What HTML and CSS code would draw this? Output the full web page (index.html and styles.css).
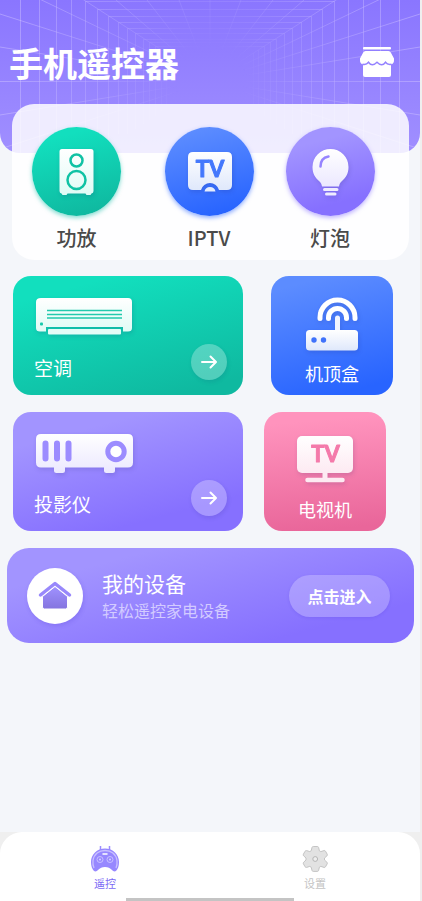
FILE: index.html
```html
<!DOCTYPE html>
<html lang="zh-CN">
<head>
<meta charset="utf-8">
<meta name="viewport" content="width=device-width, initial-scale=1">
<title>手机遥控器</title>
<link rel="stylesheet" href="styles.css">
</head>
<body>
<div class="app">
  <header class="hero">
    <svg class="hero-grid" viewBox="0 0 420 153" preserveAspectRatio="xMidYMin slice" aria-hidden="true">
      <defs>
        <radialGradient id="fade" gradientUnits="userSpaceOnUse" cx="210" cy="81" r="210">
          <stop offset="0.15" stop-color="#fff" stop-opacity="0"/>
          <stop offset="0.5" stop-color="#fff" stop-opacity="0.5"/>
          <stop offset="1" stop-color="#fff"/>
        </radialGradient>
        <mask id="fadeMask" maskUnits="userSpaceOnUse" x="0" y="0" width="420" height="153"><rect width="420" height="153" fill="url(#fade)"/></mask>
        <path id="wall" d="M399.500 0V153M380.500 0V153M363.500 0V153M348.500 0V153M334.500 1V153M322.500 9V153M311.500 16V153M301.500 22V134M292.500 28V134M284.500 33V129M276.500 39V124M270.500 42V120M264.500 46V116M258.500 50V112M253.500 53V109M210 81L420-54M210 81L420-20M210 81L420 14M210 81L420 47M210 81.500H420M210 81L420 115M210 81L420 149"/>
      </defs>
      <g mask="url(#fadeMask)" stroke="#d9ccff" stroke-opacity="0.42" fill="none">
        <use href="#wall"/>
        <use href="#wall" transform="translate(420 0) scale(-1 1)"/>
        <path d="M86 1.500H334M98 9.500H322M109 16.500H311M119 22.500H301M128 28.500H292M136 33.500H284M144 39.500H276M150 42.500H270M156 46.500H264M210 81V0M210 81L241 0M210 81L273 0M210 81L304 0M210 81L179 0M210 81L147 0M210 81L116 0"/>
      </g>
    </svg>
    <h1>手机遥控器</h1>
    <button class="shop" type="button" aria-label="商店">
      <svg width="36" height="32" viewBox="0 0 36 32" fill="#fff">
        <rect x="4" y="1" width="28" height="2.500" rx="1"/>
        <path d="M4 16.500h28V29q0 2-2 2H6q-2 0-2-2z"/>
        <path d="M6.500 5h23q1.500 0 2.300 1.500l3.200 6v1.500a4.500 4.500 0 0 1-8.500 2.300 4.700 4.700 0 0 1-8.500 0 4.700 4.700 0 0 1-8.500 0A4.500 4.500 0 0 1 1 14v-1.500l3.200-6Q5 5 6.500 5z"/>
        <path d="M3.500 18.300q4 .8 6-2 3.500 5 8.500 0 5 5 8.500 0 2 2.800 6 2" fill="none" stroke="#9482ff" stroke-width="1.500"/>
      </svg>
    </button>
  </header>

  <main>
    <section class="quick">
      <a class="quick-item" href="#amp">
        <svg class="disc green" viewBox="0 0 89 89">
          <g class="lift">
            <path fill="url(#mint)" d="M30 22h29q2.500 0 2.500 2.500V64q0 2-2 2.500L58.500 68h-4l-1-1.500h-18l-1 1.500h-4l-1-1.500q-2-.5-2-2.500V24.500q0-2.500 2.500-2.500z"/>
            <circle cx="44.500" cy="33.500" r="6" fill="none" stroke="#10c2a4" stroke-width="2.500"/>
            <circle cx="44.500" cy="53" r="9" fill="none" stroke="#10c2a4" stroke-width="2.500"/>
          </g>
          <defs>
            <linearGradient id="mint" x2="0" y2="1"><stop stop-color="#fff"/><stop offset="1" stop-color="#e0fbf5"/></linearGradient>
          </defs>
        </svg>
        <span>功放</span>
      </a>
      <a class="quick-item" href="#iptv">
        <svg class="disc blue" viewBox="0 0 89 89">
          <g class="lift">
            <path fill="url(#ice)" d="M28 25h34q5 0 5 5v28q0 5-5 5h-8a9.300 9.300 0 0 0-18 0h-8q-5 0-5-5V30q0-5 5-5z"/>
            <path fill="#e4ecfd" d="M39.500 64.500a5.600 5.600 0 0 1 11 0z"/>
            <text class="tv" x="45" y="50" text-anchor="middle" font-size="22" fill="#4478fc" stroke="#4478fc">TV</text>
          </g>
          <defs><linearGradient id="ice" x2="0" y2="1"><stop stop-color="#fff"/><stop offset="1" stop-color="#dfe8fb"/></linearGradient></defs>
        </svg>
        <span>IPTV</span>
      </a>
      <a class="quick-item" href="#bulb">
        <svg class="disc violet" viewBox="0 0 89 89">
          <g class="lift">
            <path fill="url(#lilac)" d="M44.500 22a18 18 0 0 1 18 18c0 7-3 11-6.500 14-2 2-2.500 3-3 5.500H36c-.5-2.500-1-3.500-3-5.500-3.500-3-6.500-7-6.500-14a18 18 0 0 1 18-18z"/>
            <path d="M38.500 62.500h12.500M40.500 67h8.500" stroke="#efecff" stroke-width="3" stroke-linecap="round"/>
            <path d="M34.500 39.500q0-8.500 8-10" fill="none" stroke="#9684ff" stroke-width="2.500" stroke-linecap="round"/>
          </g>
          <defs><linearGradient id="lilac" x2="0" y2="1"><stop stop-color="#fff"/><stop offset="1" stop-color="#ebe8ff"/></linearGradient></defs>
        </svg>
        <span>灯泡</span>
      </a>
    </section>

    <div class="row">
      <a class="tile wide green" href="#ac">
        <svg class="lift" width="98" height="40" viewBox="0 0 98 40">
          <path fill="url(#mint)" d="M5 0h87q4 0 4 4v26q0 3.500-4 3.500h-5V29H10v4.500H4Q0 33.500 0 30V4Q0 0 5 0z"/>
          <path d="M11 12.500h75M11 16.500h75M11 20h75" stroke="#22c9ad" stroke-width="1.500"/>
          <rect x="4" y="24.500" width="3" height="3" rx="1" fill="#16c9ab"/>
          <rect x="12" y="31" width="73" height="5.500" rx="1" fill="#e4fcf7"/>
        </svg>
        <div class="foot">
          <span>空调</span>
          <svg class="go" viewBox="0 0 36 36"><path d="M11 18h13.500M19.500 12.500l5.500 5.500-5.500 5.500"/></svg>
        </div>
      </a>
      <a class="tile small blue" href="#box">
        <svg class="lift" width="54" height="54" viewBox="0 0 54 54">
          <g fill="none" stroke="#fff" stroke-width="5" stroke-linecap="round">
            <path d="M15 20.500v-1a17.500 17.500 0 0 1 35 0v1M23.500 20.500v-1a9 9 0 0 1 18 0v1"/>
            <path d="M32.500 20V34" stroke="#f1f4ff"/>
          </g>
          <rect x="1" y="32" width="52" height="20.500" rx="3.500" fill="url(#ice)"/>
          <circle cx="9" cy="42" r="2.700" fill="#3f72fb"/><circle cx="18.500" cy="42" r="2.700" fill="#3f72fb"/>
        </svg>
        <span>机顶盒</span>
      </a>
    </div>

    <div class="row row-second">
      <a class="tile wide violet" href="#projector">
        <svg class="lift" width="98" height="40" viewBox="0 0 98 40">
          <path fill="url(#lilac)" d="M5 0h87q5 0 5 5v23.500q0 5-5 5H79v3q0 2.500-2.500 2.500h-6q-2.500 0-2.500-2.500v-3H29v3q0 2.500-2.500 2.500h-6q-2.500 0-2.500-2.500v-3H5q-5 0-5-5V5q0-5 5-5z"/>
          <path d="M9.500 9.500v15M21 9.500v15M32.500 9.500v15" stroke="#9c8cff" stroke-width="6" stroke-linecap="round"/>
          <circle cx="80" cy="17.500" r="8.200" fill="#fff" stroke="#9c8cff" stroke-width="5"/>
        </svg>
        <div class="foot">
          <span>投影仪</span>
          <svg class="go" viewBox="0 0 36 36"><path d="M11 18h13.500M19.500 12.500l5.500 5.500-5.500 5.500"/></svg>
        </div>
      </a>
      <a class="tile small pink" href="#tv">
        <svg class="lift" width="58" height="54" viewBox="0 0 58 54">
          <rect x="1" y="2" width="56" height="37" rx="5" fill="url(#rose)"/>
          <path d="M29 38v8" stroke="#fdeaf2" stroke-width="5"/>
          <path d="M11.500 46h35" stroke="#fdeaf2" stroke-width="4.500" stroke-linecap="round"/>
          <text class="tv" x="29.500" y="28" text-anchor="middle" font-size="22" fill="#f47aaa" stroke="#f47aaa">TV</text>
          <defs><linearGradient id="rose" x2="0" y2="1"><stop stop-color="#fff"/><stop offset="1" stop-color="#fdeaf2"/></linearGradient></defs>
        </svg>
        <span>电视机</span>
      </a>
    </div>

    <section class="banner violet">
      <svg class="home" viewBox="0 0 56 56">
        <circle cx="28" cy="28" r="28" fill="#fff"/>
        <path d="M13.500 27L28 15.500 42.500 27" fill="none" stroke="#9888fb" stroke-width="3.500" stroke-linecap="round" stroke-linejoin="round"/>
        <path d="M28 18.500L40.500 28.500V39q0 2-2 2h-21q-2 0-2-2V28.500z" fill="url(#house)" stroke="#fff"/>
        <defs><linearGradient id="house" x2="0" y2="1"><stop stop-color="#a092ff"/><stop offset="1" stop-color="#8474df"/></linearGradient></defs>
      </svg>
      <div class="banner-text">
        <h2>我的设备</h2>
        <p>轻松遥控家电设备</p>
      </div>
      <button class="enter" type="button">点击进入</button>
    </section>
  </main>

  <div class="dock">
    <nav class="tabs">
      <a class="tab active" href="#remote">
        <svg width="28" height="26" viewBox="0 0 28 26">
          <path d="M9.500 0v5M18.500 0v5" stroke="#9b8cff" stroke-width="1.500"/>
          <path d="M14 2.500c8 0 14 6 14 13.500 0 4-1 7-3 9-1.500 1-3 .3-4-1-2-2-4-3-7-3s-5 1-7 3c-1 1.300-2.500 2-4 1-2-2-3-5-3-9C0 8.500 6 2.500 14 2.500z" fill="#9788ff"/>
          <path d="M3 22q-1.500-3-1-7.500C3 8 8 4.500 14 4.500S25 8 26 14.500q.5 4.500-1 7.500" fill="none" stroke="#c9c1ff" stroke-width="1.300"/>
          <g fill="none" stroke="#c9c1ff"><circle cx="9" cy="13.500" r="3"/><circle cx="19" cy="13.500" r="3"/></g>
          <circle cx="9" cy="13.500" r="1" fill="#d8d2ff"/><circle cx="19" cy="13.500" r="1" fill="#d8d2ff"/>
          <path d="M12 8h4" stroke="#fff" stroke-width="1.500" stroke-linecap="round"/>
        </svg>
        <span>遥控</span>
      </a>
      <a class="tab" href="#settings">
        <svg width="28" height="26" viewBox="0 0 28 26">
          <path d="M11 1.500q.3-1 1.300-1h4q1 0 1.300 1l.8 3.300 1.400.8 3.200-1q1-.2 1.500.6l1.700 3q.5 1-.3 1.700L23.500 12v2l2.400 2.200q.8.700.3 1.600l-1.700 3q-.5.800-1.500.6l-3.200-1-1.400.8-.8 3.200q-.3 1-1.300 1h-4q-1 0-1.300-1l-.8-3.200-1.400-.8-3.200 1q-1 .2-1.500-.6l-1.700-3q-.5-.9.300-1.600L5 14v-2L2.700 9.900q-.8-.7-.3-1.700l1.700-3q.5-.8 1.500-.6l3.200 1 1.400-.8z" fill="#e2e2e2" stroke="#c4c4c4"/>
          <circle cx="14.200" cy="13" r="2.400" fill="#eee" stroke="#b5b5b5"/>
        </svg>
        <span>设置</span>
      </a>
    </nav>
    <div class="indicator"></div>
  </div>
</div>
</body>
</html>
```
FILE: styles.css
```css
* { box-sizing: border-box; }

body {
  margin: 0;
  font-family: "Noto Sans CJK SC", "Noto Sans", sans-serif;
  background: #efefef;
}

a { color: inherit; text-decoration: none; }
button { font: inherit; border: 0; padding: 0; cursor: pointer; }
svg { display: block; overflow: visible; }
h1, h2, p { margin: 0; }

.app {
  display: flex;
  flex-direction: column;
  min-height: 100vh;
  margin-right: 2px;
  background: #f4f6fa;
}

.green { background: linear-gradient(165deg, #12dfbe 15%, #0fb9a0 90%); }
.blue { background: linear-gradient(165deg, #5c8cff 10%, #2864ff 90%); }
.violet { background: linear-gradient(165deg, #a294ff 20%, #8670ff 80%); }
.pink { background: linear-gradient(175deg, #ff93bd 10%, #e9669a 95%); }

.hero {
  position: relative;
  display: flex;
  justify-content: space-between;
  align-items: flex-start;
  height: 153px;
  padding: 38px 25px 0 9px;
  overflow: hidden;
  color: #fff;
  border-radius: 0 0 20px 20px;
  background: linear-gradient(#8a76ff, #a08fff);
}

.hero-grid {
  position: absolute;
  inset: 0;
  width: 100%;
  height: 100%;
}

.hero h1 {
  position: relative;
  font-size: 34px;
  line-height: 50px;
}

.shop {
  position: relative;
  margin-top: 8px;
  background: none;
}

.quick {
  position: relative;
  display: grid;
  grid-template-columns: 129fr 136fr 106fr;
  height: 156px;
  margin: -49px 11px 16px 12px;
  padding: 23px 26px 0 0;
  border-radius: 22px;
  background: rgba(255, 255, 255, 0.84);
}

.quick-item {
  display: flex;
  flex-direction: column;
  align-items: center;
  gap: 8px;
  font-size: 20px;
  font-weight: 500;
  line-height: 28px;
  color: #4a4a4a;
}

.disc {
  width: 89px;
  height: 89px;
  border-radius: 50%;
}
.disc.green { box-shadow: 0 2px 4px rgba(16, 190, 165, 0.5); }
.disc.blue { box-shadow: 0 2px 4px rgba(40, 100, 255, 0.5); }
.disc.violet { box-shadow: 0 2px 4px rgba(134, 112, 255, 0.5); }

.lift { filter: drop-shadow(1px 2px 2px rgba(20, 20, 90, 0.14)); }

.tv {
  font-family: Lato, sans-serif;
  font-weight: 700;
  stroke-linejoin: round;
}

.row {
  display: grid;
  grid-template-columns: 230fr 122fr;
  gap: 28px;
  margin: 0 27px 17px 13px;
}
.row-second {
  gap: 21px;
  margin-right: 34px;
}

.tile {
  display: flex;
  flex-direction: column;
  height: 119px;
  padding-top: 22px;
  color: #fff;
  border-radius: 18px;
}

.wide {
  justify-content: space-between;
  padding: 22px 16px 15px 23px;
  font-size: 19px;
  line-height: 24px;
}

.small {
  align-items: center;
  gap: 9px;
  font-size: 18px;
  line-height: 24px;
}

.foot {
  display: flex;
  justify-content: space-between;
  align-items: flex-end;
}
.foot span { margin-left: -2px; }

.go {
  width: 36px;
  height: 36px;
  border-radius: 50%;
  background: rgba(255, 255, 255, 0.28);
  box-shadow: 1px 2px 4px rgba(20, 20, 90, 0.1);
  fill: none;
  stroke: #fff;
  stroke-width: 2;
  stroke-linecap: round;
  stroke-linejoin: round;
}

.banner {
  display: flex;
  align-items: center;
  height: 95px;
  margin: 0 6px 0 7px;
  padding: 0 24px 0 20px;
  color: #fff;
  border-radius: 22px;
}

.home {
  width: 56px;
  height: 56px;
  border-radius: 50%;
  box-shadow: 1px 2px 4px rgba(70, 50, 200, 0.2);
}

.banner-text {
  flex: 1;
  margin-left: 19px;
}
.banner h2 {
  font-size: 21px;
  font-weight: 400;
  line-height: 28px;
}
.banner p {
  font-size: 16px;
  line-height: 26px;
  color: #d3cbff;
}

.enter {
  width: 101px;
  height: 42px;
  font-size: 16px;
  font-weight: 700;
  color: #fff;
  border-radius: 21px;
  background: rgba(255, 255, 255, 0.24);
  box-shadow: 0 1px 3px rgba(70, 50, 200, 0.15);
}

.dock {
  margin-top: auto;
  background: #efefef;
}

.tabs {
  display: grid;
  grid-template-columns: 1fr 1fr;
  height: 66px;
  padding-top: 14px;
  border-radius: 22px 22px 0 0;
  background: #fff;
}

.tab {
  display: flex;
  flex-direction: column;
  align-items: center;
  gap: 4px;
  font-size: 11px;
  line-height: 14px;
  color: #c4c4c4;
}
.tab.active { color: #7c69f5; }

.indicator {
  height: 3px;
  background: linear-gradient(#c4c4c4, #c4c4c4) center / 40% 100% no-repeat #fff;
}
```
